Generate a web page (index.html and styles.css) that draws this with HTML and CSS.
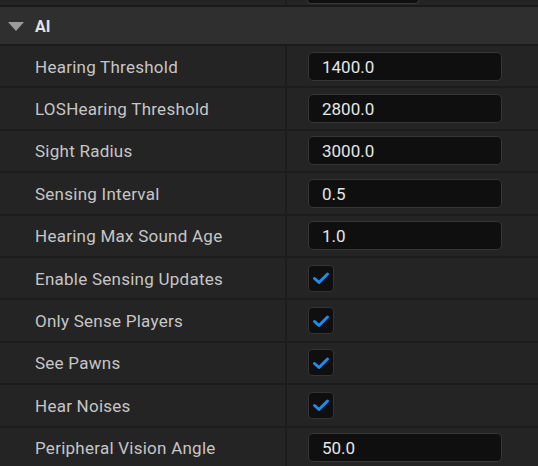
FILE: index.html
```html
<!DOCTYPE html>
<html>
<head>
<meta charset="utf-8">
<link rel="stylesheet" href="styles.css">
</head>
<body>
<div class="panel">
  <div class="prev">
    <div class="prev-label"></div>
    <div class="prev-value"><div class="prev-box"></div></div>
  </div>
  <div class="header">
    <svg class="caret" width="16" height="9" viewBox="0 0 16 9"><polygon points="0,0 16,0 8,9" fill="#9b9b9b"/></svg>
    <span class="title">AI</span>
  </div>
  <div class="row"><div class="label">Hearing Threshold</div><div class="value"><div class="input">1400.0</div></div></div>
  <div class="row"><div class="label">LOSHearing Threshold</div><div class="value"><div class="input">2800.0</div></div></div>
  <div class="row"><div class="label">Sight Radius</div><div class="value"><div class="input">3000.0</div></div></div>
  <div class="row"><div class="label">Sensing Interval</div><div class="value"><div class="input">0.5</div></div></div>
  <div class="row"><div class="label">Hearing Max Sound Age</div><div class="value"><div class="input">1.0</div></div></div>
  <div class="row"><div class="label">Enable Sensing Updates</div><div class="value"><div class="check"><svg width="24" height="24" viewBox="0 0 24 24"><polyline points="5.5,12.5 10,16.5 18.5,8" fill="none" stroke="#1d8cf0" stroke-width="3" stroke-linecap="round" stroke-linejoin="round"/></svg></div></div></div>
  <div class="row"><div class="label">Only Sense Players</div><div class="value"><div class="check"><svg width="24" height="24" viewBox="0 0 24 24"><polyline points="5.5,12.5 10,16.5 18.5,8" fill="none" stroke="#1d8cf0" stroke-width="3" stroke-linecap="round" stroke-linejoin="round"/></svg></div></div></div>
  <div class="row"><div class="label">See Pawns</div><div class="value"><div class="check"><svg width="24" height="24" viewBox="0 0 24 24"><polyline points="5.5,12.5 10,16.5 18.5,8" fill="none" stroke="#1d8cf0" stroke-width="3" stroke-linecap="round" stroke-linejoin="round"/></svg></div></div></div>
  <div class="row"><div class="label">Hear Noises</div><div class="value"><div class="check"><svg width="24" height="24" viewBox="0 0 24 24"><polyline points="5.5,12.5 10,16.5 18.5,8" fill="none" stroke="#1d8cf0" stroke-width="3" stroke-linecap="round" stroke-linejoin="round"/></svg></div></div></div>
  <div class="row"><div class="label">Peripheral Vision Angle</div><div class="value"><div class="input">50.0</div></div></div>
</div>
</body>
</html>
```
FILE: styles.css
```css
html, body {
  margin: 0;
  padding: 0;
  background: #242424;
  overflow: hidden;
}
.panel {
  width: 538px;
  font-family: Roboto, "Open Sans", "Liberation Sans", sans-serif;
  font-size: 17px;
  color: #c6c6c6;
}
.prev {
  display: flex;
  height: 5px;
  background: #242424;
  border-bottom: 2px solid #1a1a1a;
}
.prev-label {
  width: 285px;
  border-right: 2px solid #1c1c1c;
}
.prev-value {
  padding-left: 20px;
}
.prev-box {
  width: 110px;
  height: 3px;
  background: #0f0f0f;
  border: 1px solid #383838;
  border-top: none;
  border-radius: 0 0 4px 4px;
}
.header {
  box-sizing: border-box;
  height: 39px;
  background: #2f2f2f;
  border-bottom: 2px solid #1b1b1b;
  display: flex;
  align-items: center;
  padding-left: 8px;
}
.caret {
  display: block;
  margin-top: 1px;
}
.title {
  margin-left: 11px;
  font-weight: 700;
  color: #e2e2e2;
  font-size: 16px;
  padding-top: 1px;
}
.row {
  box-sizing: border-box;
  height: 42.4px;
  display: flex;
  border-bottom: 2px solid #1c1c1c;
  background: #242424;
}
.label {
  box-sizing: border-box;
  width: 287px;
  border-right: 2px solid #1c1c1c;
  padding-left: 35px;
  padding-top: 1px;
  display: flex;
  align-items: center;
  letter-spacing: 0.25px;
}
.value {
  flex: 1;
  display: flex;
  align-items: center;
  padding-left: 21px;
}
.input {
  box-sizing: border-box;
  width: 194px;
  height: 29px;
  background: #0f0f0f;
  border: 1px solid #363636;
  border-radius: 5px;
  padding-left: 13px;
  padding-top: 1px;
  display: flex;
  align-items: center;
  color: #e6e6e6;
  font-size: 17px;
}
.check {
  box-sizing: border-box;
  width: 26px;
  height: 27px;
  background: #0f0f0f;
  border: 1px solid #343434;
  border-radius: 4px;
  display: flex;
  align-items: center;
  justify-content: center;
}
.check svg {
  display: block;
}
```
